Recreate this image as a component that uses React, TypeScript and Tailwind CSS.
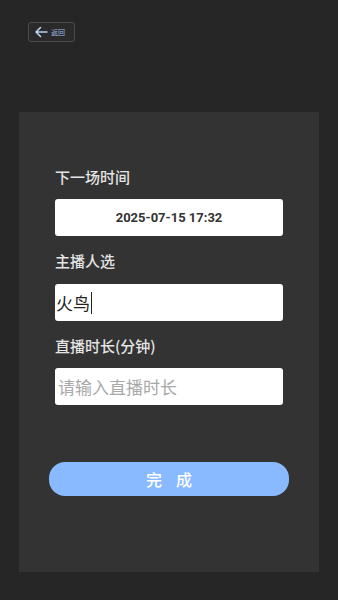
export default function App() {
  const font = { fontFamily: '"Noto Sans CJK SC", Roboto, sans-serif' };
  return (
    <div className="w-[338px] h-[600px] bg-[#262626] flex flex-col" style={font}>
      {/* Back */}
      <div className="pt-[22px] pl-[28px] h-[112px]">
        <button className="w-[47px] h-[20px] flex items-center gap-[3px] pl-[5px] rounded-[3px] border border-[#4a4a4a] bg-[#2a2a2a]">
          <svg width="14" height="12" viewBox="0 0 14 12" fill="none" stroke="#b9d0f0" strokeWidth="1.6" strokeLinecap="round" strokeLinejoin="round">
            <path d="M13 6H2M6.5 1.5L2 6l4.5 4.5" />
          </svg>
          <span className="text-[7px] leading-none text-[#9fb8e0]">返回</span>
        </button>
      </div>

      {/* Panel */}
      <div className="mx-[19px] w-[300px] h-[460px] bg-[#333333] px-[36px] pt-[55px]">
        <div className="text-[15px] leading-[20px] font-medium text-[#e4e4e4]">下一场时间</div>
        <div className="mt-[12px] h-[37px] bg-white rounded-[3px] flex items-center justify-center text-[13px] font-bold text-[#333]" style={{ fontFamily: 'Roboto, "Noto Sans CJK SC", sans-serif' }}>
          2025-07-15 17:32
        </div>

        <div className="mt-[15px] text-[15px] leading-[20px] font-medium text-[#e4e4e4]">主播人选</div>
        <div className="mt-[13px] h-[37px] bg-white rounded-[3px] flex items-center pl-[1px] text-[17px] text-[#222]">
          火鸟<span className="inline-block w-px h-[22px] bg-[#222] ml-[1px]" />
        </div>

        <div className="mt-[15px] text-[15px] leading-[20px] font-medium text-[#e4e4e4]">直播时长(分钟)</div>
        <div className="mt-[12px] h-[37px] bg-white rounded-[3px] flex items-center pl-[3px] text-[17px] text-[#a8a8a8]">
          请输入直播时长
        </div>

        <button className="mt-[57px] -ml-[6px] w-[240px] h-[34px] rounded-[16px] bg-[#89b9ff] text-white text-[16px] font-medium tracking-[14px] flex items-center justify-center pl-[14px]">
          完成
        </button>
      </div>
    </div>
  );
}
